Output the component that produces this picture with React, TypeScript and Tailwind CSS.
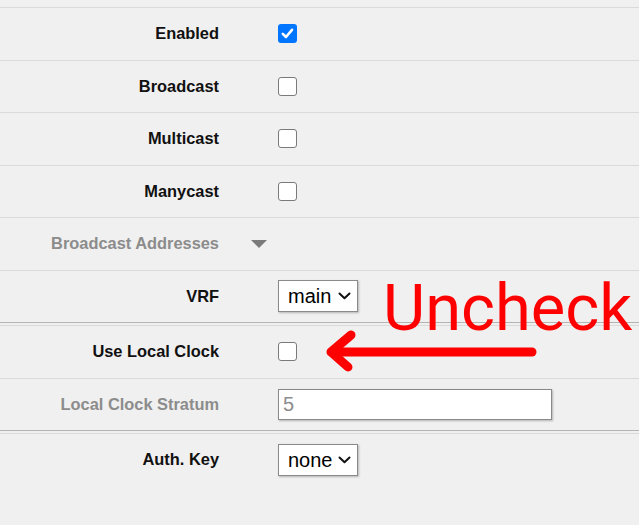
import React from 'react';

interface Row {
  label: string;
  kind: 'check' | 'select' | 'text' | 'group';
  checked?: boolean;
  value?: string;
  muted?: boolean;
}

const sections: Row[][] = [
  [
    { label: 'Enabled', kind: 'check', checked: true },
    { label: 'Broadcast', kind: 'check' },
    { label: 'Multicast', kind: 'check' },
    { label: 'Manycast', kind: 'check' },
    { label: 'Broadcast Addresses', kind: 'group', muted: true },
    { label: 'VRF', kind: 'select', value: 'main' },
  ],
  [
    { label: 'Use Local Clock', kind: 'check' },
    { label: 'Local Clock Stratum', kind: 'text', value: '5', muted: true },
  ],
  [{ label: 'Auth. Key', kind: 'select', value: 'none' }],
];

const Checkbox: React.FC<{ checked?: boolean }> = ({ checked }) =>
  checked ? (
    <span className="flex h-[19px] w-[19px] items-center justify-center rounded-[3px] bg-[#0075ff]">
      <svg width="19" height="19" viewBox="0 0 19 19">
        <polyline points="4.8,9.8 8,13 14,5.8" fill="none" stroke="#fff" strokeWidth="2.6" strokeLinecap="round" strokeLinejoin="round" />
      </svg>
    </span>
  ) : (
    <span className="block h-[19px] w-[19px] rounded-[3px] border-[1.5px] border-[#7a7a7a] bg-white" />
  );

const Select: React.FC<{ value: string }> = ({ value }) => (
  <div className="flex h-[32px] w-[80px] items-center justify-between border border-[#8a8a8a] bg-white pl-[9px] pr-[6px] text-[20px] text-black shadow-[1px_1px_2px_rgba(0,0,0,0.25)]">
    <span>{value}</span>
    <svg width="13" height="8" viewBox="0 0 13 8">
      <polyline points="1.5,1.5 6.5,6.2 11.5,1.5" fill="none" stroke="#111" strokeWidth="2" strokeLinecap="round" strokeLinejoin="round" />
    </svg>
  </div>
);

const Control: React.FC<{ row: Row }> = ({ row }) => {
  switch (row.kind) {
    case 'check':
      return <Checkbox checked={row.checked} />;
    case 'select':
      return <Select value={row.value ?? ''} />;
    case 'text':
      return (
        <div className="flex h-[31px] w-[274px] items-center border border-[#8a8a8a] bg-white pl-[4px] text-[20px] text-[#8c8c8c] shadow-[1px_1px_2px_rgba(0,0,0,0.25)]">
          {row.value}
        </div>
      );
    default:
      return null;
  }
};

const App: React.FC = () => {
  return (
    <div className="relative h-[525px] w-full overflow-hidden bg-[#f0f0f0] pt-[7px] font-['Liberation_Sans',Arial,sans-serif]">
      {sections.map((rows, si) => (
        <div key={si} className={si > 0 ? 'mt-[2px]' : ''}>
          <div className={si < sections.length - 1 ? 'border-b border-[#b4b4b4]' : ''}>
            {rows.map((row) => (
              <div key={row.label} className="flex h-[52.5px] items-center border-t border-[#dadada]">
                <div
                  className={`w-[219px] text-right text-[16.4px] font-bold ${row.muted ? 'text-[#8c8c8c]' : 'text-[#111]'}`}
                >
                  {row.label}
                </div>
                {row.kind === 'group' ? (
                  <svg className="ml-[32px]" width="16" height="8" viewBox="0 0 16 8">
                    <polygon points="0,0 16,0 8,8" fill="#7a7a7a" />
                  </svg>
                ) : (
                  <div className="pl-[59px]">
                    <Control row={row} />
                  </div>
                )}
              </div>
            ))}
          </div>
        </div>
      ))}

      {/* annotation */}
      <div className="pointer-events-none absolute left-[383px] top-[276px] font-['Roboto',sans-serif] text-[65px] leading-none text-[#ff0000]">
        Uncheck
      </div>
      <svg className="pointer-events-none absolute left-0 top-0" width="639" height="525">
        <g stroke="#ff0000" strokeWidth="9" strokeLinecap="round" strokeLinejoin="round" fill="none">
          <line x1="532" y1="352" x2="332" y2="352" />
          <polyline points="351,335 331,352 348,367" />
        </g>
      </svg>
    </div>
  );
};

export default App;
